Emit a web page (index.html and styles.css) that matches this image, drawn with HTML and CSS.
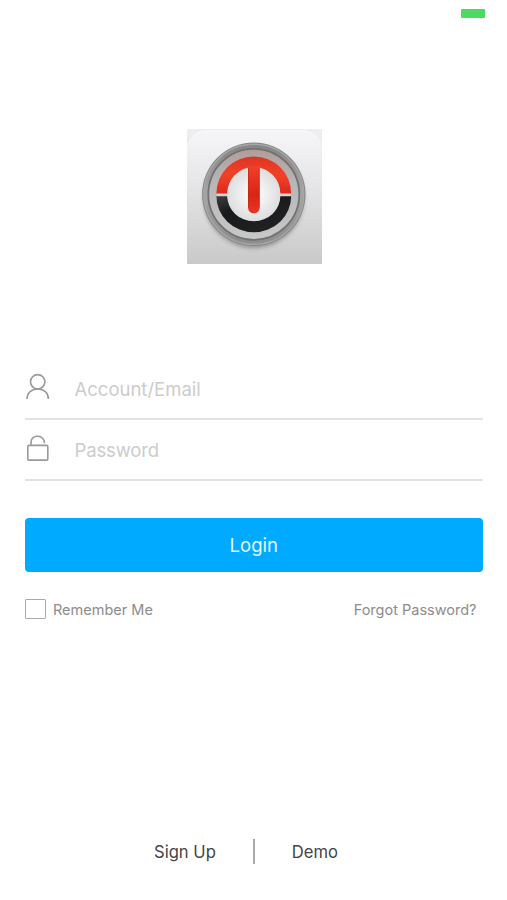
FILE: index.html
```html
<!DOCTYPE html>
<html lang="en">
<head>
<meta charset="utf-8">
<title>Login</title>
<link rel="stylesheet" href="styles.css">
</head>
<body>
<main class="screen">
  <header class="status"><span class="battery"></span></header>
  <svg class="logo" viewBox="0 0 135 135" aria-hidden="true">
    <defs>
      <linearGradient id="tile" x1="0" y1="0" x2="0" y2="1"><stop offset="0" stop-color="#f6f6f8"/><stop offset=".45" stop-color="#e4e4e6"/><stop offset="1" stop-color="#c9c9c9"/></linearGradient>
      <linearGradient id="corner" x1="0" y1="0" x2="0" y2="1"><stop offset="0" stop-color="#eeeeee"/><stop offset="1" stop-color="#d0d0d0"/></linearGradient>
      <linearGradient id="rim" x1="0" y1="0" x2="0" y2="1"><stop offset="0" stop-color="#858585"/><stop offset=".5" stop-color="#a5a5a5"/><stop offset="1" stop-color="#8c8c8c"/></linearGradient>
      <linearGradient id="plate" x1="0" y1="0" x2="0" y2="1"><stop offset="0" stop-color="#b09d99"/><stop offset=".35" stop-color="#b7b5b6"/><stop offset="1" stop-color="#c8c8c8"/></linearGradient>
      <linearGradient id="red" x1="0" y1="0" x2="0" y2="1"><stop offset="0" stop-color="#dc3522"/><stop offset=".5" stop-color="#f34128"/><stop offset="1" stop-color="#dc2a1c"/></linearGradient>
      <linearGradient id="stem" x1="0" y1="0" x2="0" y2="1"><stop offset="0" stop-color="#f04129"/><stop offset=".6" stop-color="#d92419"/><stop offset="1" stop-color="#ec3325"/></linearGradient>
      <linearGradient id="black" x1="0" y1="0" x2="1" y2="1"><stop offset="0" stop-color="#3c3e3f"/><stop offset=".3" stop-color="#17191b"/><stop offset="1" stop-color="#242424"/></linearGradient>
      <radialGradient id="dial"><stop offset="0" stop-color="#ffffff"/><stop offset="1" stop-color="#dedee0"/></radialGradient>
      <filter id="shade" x="-20%" y="-20%" width="140%" height="140%"><feGaussianBlur stdDeviation="2"/></filter>
    </defs>
    <rect width="135" height="135" fill="url(#corner)"/>
    <path d="M0 135V22Q0 1 22 1H113Q135 1 135 22V135Z" fill="url(#tile)"/>
    <circle cx="66.8" cy="69" r="50" fill="#666" opacity=".6" filter="url(#shade)"/>
    <circle cx="66.8" cy="65.3" r="51.7" fill="#858585"/>
    <circle cx="66.8" cy="65.3" r="50" fill="url(#rim)" stroke="#a6a6a6" stroke-width="1.5"/>
    <circle cx="66.8" cy="65.3" r="45.5" fill="url(#plate)" stroke="#727272" stroke-width="1.8"/>
    <circle cx="66.8" cy="65.3" r="37" fill="#d6d4d3"/>
    <path d="M29.4 64.4A37.4 37 0 0 1 104.2 64.4H93.3A26.5 26.5 0 0 0 40.3 64.4Z" fill="url(#red)"/>
    <path d="M29.4 67.2H40.3A26.5 25 0 0 0 93.3 67.2H104.2A37.4 36 0 0 1 29.4 67.2Z" fill="url(#black)"/>
    <circle cx="66.8" cy="65.3" r="26.5" fill="url(#dial)"/>
    <path d="M61 37H72.7V78.5A5.85 5.85 0 0 1 61 78.5Z" fill="url(#stem)"/>
    <path d="M61.5 39V78M72.2 39V78" stroke="#b82318" stroke-width=".8" opacity=".65"/>
  </svg>
  <form class="form">
    <label class="field">
      <svg class="icon" viewBox="0 0 26 30" aria-hidden="true"><circle cx="12.7" cy="9.8" r="7.2"/><path d="M2 27C2 21 6.2 17 12.7 17S23.4 21 23.4 27"/></svg>
      <span class="hint">Account/Email</span>
    </label>
    <label class="field">
      <svg class="icon" viewBox="0 0 26 30" aria-hidden="true"><rect x="2.8" y="12.4" width="20" height="14.7" rx="1.2"/><path d="M6 12.4V10C6 1.5 16.5 1.5 19 7.5Q19.4 8.8 19.4 10.3"/></svg>
      <span class="hint password">Password</span>
    </label>
    <button class="login" type="button"><span>Login</span></button>
    <div class="options">
      <span class="remember"><span class="box"></span><span class="remember-text">Remember Me</span></span>
      <span class="forgot">Forgot Password?</span>
    </div>
  </form>
  <footer class="links"><span class="signup">Sign Up</span><span class="divider"></span><span class="demo">Demo</span></footer>
</main>
</body>
</html>
```
FILE: styles.css
```css
* { box-sizing: border-box; }
body { margin: 0; background: #fff; font-family: Inter, "Liberation Sans", sans-serif; }
.screen { width: 507px; height: 900px; display: flex; flex-direction: column; overflow: hidden; }
.status { height: 129px; padding: 9px 22.5px 0 0; display: flex; justify-content: flex-end; flex: none; }
.battery { width: 24px; height: 8.5px; border-radius: 1px; background: #4cd964; }
.logo { width: 135px; height: 135px; margin-left: 186.5px; flex: none; }
.form { margin: 95px 24.5px 0 25px; }
.field { height: 61px; display: flex; align-items: center; border-bottom: 2px solid #e2e2e2; }
.icon { width: 26px; height: 30px; margin: -3px 23.5px 0 0; fill: none; stroke: #999; stroke-width: 1.6; flex: none; }
.hint { font-size: 18.5px; line-height: 24px; color: #ccc; white-space: nowrap; }
.password { letter-spacing: -0.15px; }
.login { display: flex; align-items: center; justify-content: center; width: 100%; height: 54px; margin-top: 37px; border: 0; border-radius: 4px; background: #00aaff; color: #e6f7ff; font: 18.5px/24px Inter, "Liberation Sans", sans-serif; }
.options { display: flex; align-items: center; justify-content: space-between; height: 22px; margin-top: 26px; padding-right: 6px; font-size: 14.5px; color: #8c8c8c; }
.remember { display: flex; align-items: center; gap: 7.5px; }
.box { width: 20.5px; height: 20.5px; border: 1.5px solid #aaa; border-radius: 1px; }
.links { height: 26px; margin: auto 0 35.5px 154px; display: flex; align-items: center; font-size: 16.6px; color: #444; }
.divider { width: 2.5px; height: 25px; margin: 0 36.5px 0 37px; background: #aaa; }
```
